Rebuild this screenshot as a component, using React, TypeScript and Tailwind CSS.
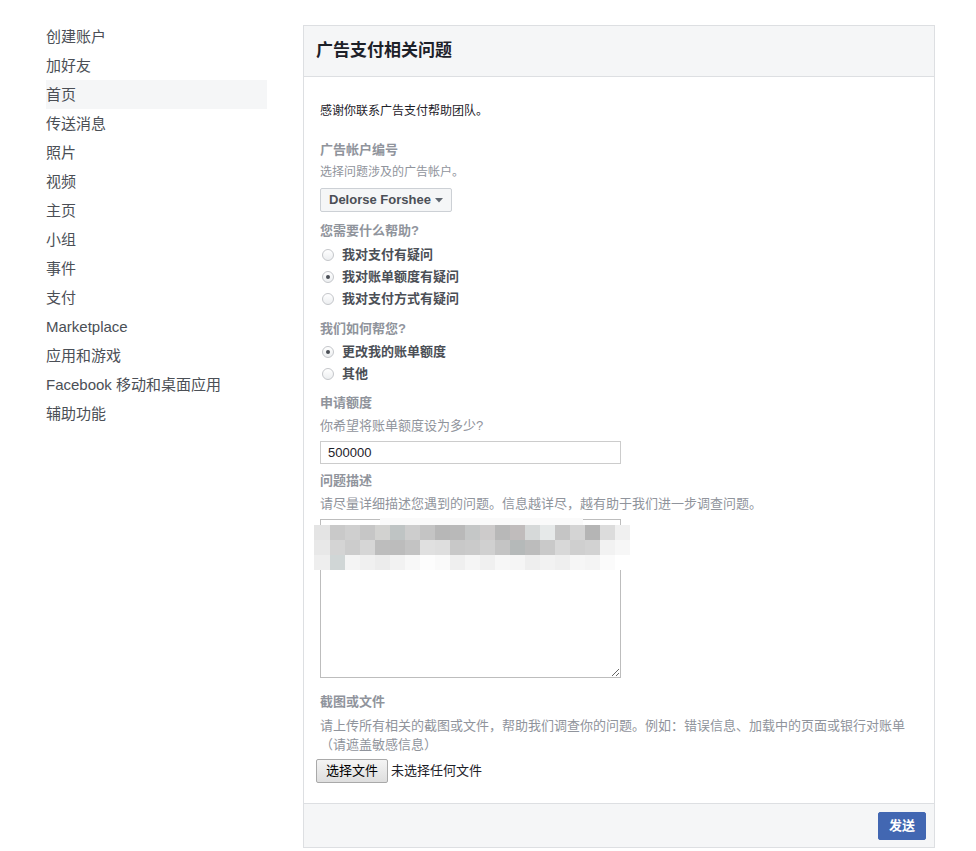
import React from "react";

const navItems = [
  "创建账户",
  "加好友",
  "首页",
  "传送消息",
  "照片",
  "视频",
  "主页",
  "小组",
  "事件",
  "支付",
  "Marketplace",
  "应用和游戏",
  "Facebook 移动和桌面应用",
  "辅助功能",
];

const mosaicRows: string[][] = [
  [
    "bg-[#e4e4e4]", "bg-[#c9c9c9]", "bg-[#cfcfcf]", "bg-[#c6c6c6]", "bg-[#d2d2d0]", "bg-[#bfc4c4]", "bg-[#cdcdcd]",
    "bg-[#c4c4c4]", "bg-[#b7b7b7]", "bg-[#b9b9b9]", "bg-[#c5c7c7]", "bg-[#cdcbcb]", "bg-[#b8b8b8]",
    "bg-[#c0bcbc]", "bg-[#d6d9d9]", "bg-[#e6e9e9]", "bg-[#c5c5c5]", "bg-[#d4d4d4]", "bg-[#b5b5b5]",
    "bg-[#dcdcdc]", "bg-[#f0f0f0]",
  ],
  [
    "bg-[#e8e8e8]", "bg-[#d4d4d4]", "bg-[#cccccc]", "bg-[#d6d6d6]", "bg-[#bdbdbd]", "bg-[#bcbcbc]", "bg-[#c3c3c3]",
    "bg-[#e0e0e0]", "bg-[#dedede]", "bg-[#c8c8c8]", "bg-[#cacaca]", "bg-[#d0d0d0]", "bg-[#c4c4c4]",
    "bg-[#b5b9b9]", "bg-[#bcbcbc]", "bg-[#c9c9c9]", "bg-[#d8d8d8]", "bg-[#cfcfcf]", "bg-[#d2d2d2]",
    "bg-[#f2f2f2]", "bg-[#f7f7f7]",
  ],
  [
    "bg-[#eeeeee]", "bg-[#d0d6d6]", "bg-[#f4f4f4]", "bg-[#f0f0f0]", "bg-[#ececec]", "bg-[#f2f2f2]", "bg-[#f8f8f8]",
    "bg-[#fdfdfd]", "bg-[#fafafa]", "bg-[#efefef]", "bg-[#f5f5f5]", "bg-[#f0f0f0]", "bg-[#f7f7f7]",
    "bg-[#f5f5f5]", "bg-[#eeeeee]", "bg-[#f2f2f2]", "bg-[#efefef]", "bg-[#f6f6f6]", "bg-[#f4f4f4]",
    "bg-[#fbfbfb]", "bg-[#ffffff]",
  ],
];

function Radio({ checked, label }: { checked?: boolean; label: string }) {
  return (
    <div className="flex h-[22px] items-center">
      <span className="ml-[2px] flex h-[12px] w-[12px] items-center justify-center rounded-full border border-[#c4c6ca] bg-gradient-to-b from-[#ffffff] to-[#eceef0]">
        {checked && <span className="h-[4px] w-[4px] rounded-full bg-[#4b4f56]" />}
      </span>
      <span className="ml-[8px] text-[13px] font-bold leading-[22px] text-[#4b4f56]">{label}</span>
    </div>
  );
}

function Label({ children, className = "" }: { children: React.ReactNode; className?: string }) {
  return <div className={"text-[13px] font-bold leading-[22px] text-[#90949c] " + className}>{children}</div>;
}

function Desc({ children, className = "" }: { children: React.ReactNode; className?: string }) {
  return <div className={"text-[13px] leading-[22px] text-[#90949c] " + className}>{children}</div>;
}

export default function App() {
  return (
    <div className="flex min-h-[851px] w-full bg-white font-['Liberation_Sans','Noto_Sans_CJK_SC',sans-serif]">
      <nav className="ml-[46px] mt-[22px] w-[221px] shrink-0">
        {navItems.map((item) => (
          <div
            key={item}
            className={
              "h-[29px] text-[15px] leading-[29px] text-[#4b4f56] " + (item === "首页" ? "bg-[#f5f6f7]" : "")
            }
          >
            {item}
          </div>
        ))}
      </nav>

      <div className="ml-[36px] mt-[25px] mb-[3px] flex w-[632px] shrink-0 flex-col self-start border border-[#dddfe2] bg-white">
        <div className="flex h-[51px] items-center border-b border-[#dddfe2] bg-[#f5f6f7] px-[12px]">
          <h1 className="text-[17px] font-bold leading-[22px] text-[#1d2129]">广告支付相关问题</h1>
        </div>

        <div className="flex flex-col px-[16px] pt-[26px] pb-[20px]">
          <div className="text-[12px] leading-[16px] text-[#1d2129]">感谢你联系广告支付帮助团队。</div>

          <Label className="mt-[20px]">广告帐户编号</Label>
          <div className="text-[12px] leading-[22px] text-[#90949c]">选择问题涉及的广告帐户。</div>

          <div className="mt-[5px] flex h-[24px] w-[132px] items-center rounded-[2px] border border-[#ccd0d5] bg-[#f5f6f7] pl-[8px]">
            <span className="text-[13px] font-bold leading-[22px] text-[#4b4f56]">Delorse Forshee</span>
            <svg className="ml-[4px]" width="8" height="5" viewBox="0 0 8 5">
              <path d="M0 0 L8 0 L4 4.5 Z" fill="#606770" />
            </svg>
          </div>

          <Label className="mt-[8px]">您需要什么帮助?</Label>
          <div className="mt-[2px] flex flex-col">
            <Radio label="我对支付有疑问" />
            <Radio label="我对账单额度有疑问" checked />
            <Radio label="我对支付方式有疑问" />
          </div>

          <Label className="mt-[8px]">我们如何帮您?</Label>
          <div className="mt-[1px] flex flex-col">
            <Radio label="更改我的账单额度" checked />
            <Radio label="其他" />
          </div>

          <Label className="mt-[7px]">申请额度</Label>
          <Desc className="mt-[1px]">你希望将账单额度设为多少?</Desc>
          <input
            readOnly
            value="500000"
            className="mt-[4px] h-[23px] w-[301px] border border-[#cccccc] px-[7px] text-[13px] leading-[21px] text-[#1d2129] outline-none"
          />

          <Label className="mt-[6px]">问题描述</Label>
          <Desc className="mt-[1px]">请尽量详细描述您遇到的问题。信息越详尽，越有助于我们进一步调查问题。</Desc>
          <div className="relative mt-[4px] h-[159px] w-[301px]">
            <textarea readOnly className="block h-[159px] w-[301px] border border-[#bdbdbd] outline-none" />
            <div className="pointer-events-none absolute left-[60px] top-[-1px] h-[7px] w-[203px] bg-[#fafafa]" />
            <div className="pointer-events-none absolute left-[-6px] top-[6px] flex flex-col">
              {mosaicRows.map((row, ri) => (
                <div key={ri} className="flex">
                  {row.map((c, ci) => (
                    <div key={ci} className={(ci === 0 ? "w-[16px] " : "w-[15px] ") + "h-[15px] " + c} />
                  ))}
                </div>
              ))}
            </div>
          </div>

          <Label className="mt-[13px]">截图或文件</Label>
          <div className="mt-[3px] text-[13px] leading-[19px] text-[#90949c]">
            请上传所有相关的截图或文件，帮助我们调查你的问题。例如：错误信息、加载中的页面或银行对账单（请遮盖敏感信息）
          </div>

          <div className="mt-[5px] flex items-center">
            <button className="ml-[-4px] h-[24px] w-[72px] rounded-[2px] border border-[#a9a9a9] bg-gradient-to-b from-[#f4f4f4] to-[#dedede] text-[13px] leading-[20px] text-[#000]">
              选择文件
            </button>
            <span className="ml-[3px] text-[13px] leading-[22px] text-[#1d2129]">未选择任何文件</span>
          </div>
        </div>

        <div className="flex justify-end border-t border-[#dddfe2] bg-[#f5f6f7] pt-[8px] pb-[7px] pr-[8px]">
          <button className="h-[28px] w-[48px] rounded-[2px] border border-[#4267b2] bg-[#4267b2] text-[13px] font-bold leading-[26px] text-white">
            发送
          </button>
        </div>
      </div>
    </div>
  );
}
